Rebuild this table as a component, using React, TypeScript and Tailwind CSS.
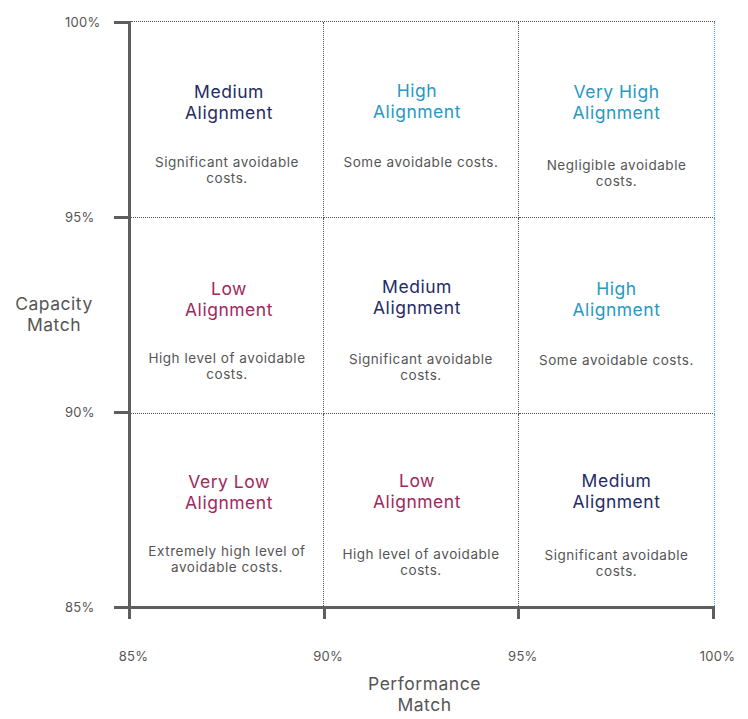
import React from "react";

type Cell = {
  title: [string, string];
  color: string;
  desc: string[];
  pt: string;
  mt: string;
  border: string;
  shift: string;
};

const NAVY = "text-[#252b66]";
const TEAL = "text-[#2898c4]";
const RED = "text-[#a0285e]";

const cells: Cell[] = [
  { title: ["Medium", "Alignment"], color: NAVY, desc: ["Significant avoidable", "costs."], pt: "pt-[59px]", mt: "mt-[31px]", border: "border-r border-b border-dotted border-[#555]", shift: "pl-[4px]" },
  { title: ["High", "Alignment"], color: TEAL, desc: ["Some avoidable costs."], pt: "pt-[58px]", mt: "mt-[32px]", border: "border-r border-b border-dotted border-[#555]", shift: "pr-[8px]" },
  { title: ["Very High", "Alignment"], color: TEAL, desc: ["Negligible avoidable", "costs."], pt: "pt-[59px]", mt: "mt-[34px]", border: "border-r border-b border-dotted border-r-[#3aa0dc] border-b-[#555]", shift: "" },
  { title: ["Low", "Alignment"], color: RED, desc: ["High level of avoidable", "costs."], pt: "pt-[60px]", mt: "mt-[30px]", border: "border-r border-b border-dotted border-[#555]", shift: "pl-[4px]" },
  { title: ["Medium", "Alignment"], color: NAVY, desc: ["Significant avoidable", "costs."], pt: "pt-[58px]", mt: "mt-[33px]", border: "border-r border-b border-dotted border-[#555]", shift: "pr-[8px]" },
  { title: ["High", "Alignment"], color: TEAL, desc: ["Some avoidable costs."], pt: "pt-[60px]", mt: "mt-[32px]", border: "border-r border-b border-dotted border-r-[#3aa0dc] border-b-[#555]", shift: "" },
  { title: ["Very Low", "Alignment"], color: RED, desc: ["Extremely high level of", "avoidable costs."], pt: "pt-[57px]", mt: "mt-[30px]", border: "border-r border-dotted border-[#555]", shift: "pl-[4px]" },
  { title: ["Low", "Alignment"], color: RED, desc: ["High level of avoidable", "costs."], pt: "pt-[56px]", mt: "mt-[34px]", border: "border-r border-dotted border-[#555]", shift: "pr-[8px]" },
  { title: ["Medium", "Alignment"], color: NAVY, desc: ["Significant avoidable", "costs."], pt: "pt-[56px]", mt: "mt-[35px]", border: "border-r border-dotted border-r-[#3aa0dc]", shift: "" },
];

const yLabels = ["100%", "95%", "90%", "85%"];
const xLabels = ["85%", "90%", "95%", "100%"];

export default function App() {
  return (
    <div
      className="w-[748px] h-[719px] bg-white overflow-hidden text-[#555]"
      style={{ fontFamily: "Inter, 'Open Sans', sans-serif" }}
    >
      <div className="flex pt-[21px]">
        {/* Left area: axis title + tick labels */}
        <div className="grid w-[114px] h-[588px]">
          <div className="col-start-1 row-start-1 flex items-center">
            <div className="w-[108px] text-center text-[17.5px] leading-[21px] tracking-[0.03em] text-[#555] pb-[2px]">
              Capacity
              <br />
              Match
            </div>
          </div>
          <div className="col-start-1 row-start-1 flex flex-col justify-between py-[1px] pl-[65px]">
            {yLabels.map((l) => (
              <div key={l} className="h-0 flex items-center text-[13px] tracking-[0.02em] leading-none whitespace-nowrap">
                {l}
              </div>
            ))}
          </div>
        </div>
        {/* left ticks */}
        <div className="flex flex-col justify-between h-[588px]">
          {yLabels.map((l) => (
            <div key={l} className="w-[14px] h-[3px] bg-[#5e5e5e]" />
          ))}
        </div>
        {/* Chart column */}
        <div className="flex flex-col">
          <div className="w-[587px] border-l-[3px] border-b-[3px] border-solid border-l-[#5e5e5e] border-b-[#5e5e5e]">
            <div className="border-t border-dotted border-[#555] grid grid-cols-[193px_195px_196px] grid-rows-[196px_196px_192px]">
              {cells.map((c, i) => (
                <div key={i} className={`flex flex-col items-center ${c.border} ${c.pt}`}>
                  <div className={`text-center text-[17.5px] leading-[21px] tracking-[0.03em] whitespace-nowrap ${c.color} ${c.shift}`}>
                    {c.title[0]}
                    <br />
                    {c.title[1]}
                  </div>
                  <div className={`text-center text-[13.5px] leading-[16px] tracking-[0.04em] whitespace-nowrap text-[#555] ${c.mt}`}>
                    {c.desc.map((d, j) => (
                      <div key={j}>{d}</div>
                    ))}
                  </div>
                </div>
              ))}
            </div>
          </div>
          {/* bottom ticks */}
          <div className="flex justify-between w-[587px] h-[10px]">
            {xLabels.map((l) => (
              <div key={l} className="w-[3px] h-[10px] bg-[#5e5e5e]" />
            ))}
          </div>
          {/* x labels */}
          <div className="flex justify-between w-[587px] mt-[37px]">
            {xLabels.map((l) => (
              <div key={l} className="w-[3px] h-0 flex items-center justify-center">
                <span className="pl-[8px] text-[13px] tracking-[0.02em] leading-none whitespace-nowrap">{l}</span>
              </div>
            ))}
          </div>
          <div className="w-[587px] text-center text-[17.5px] leading-[21px] tracking-[0.03em] mt-[17px] pl-[6px]">
            Performance
            <br />
            Match
          </div>
        </div>
      </div>
    </div>
  );
}
